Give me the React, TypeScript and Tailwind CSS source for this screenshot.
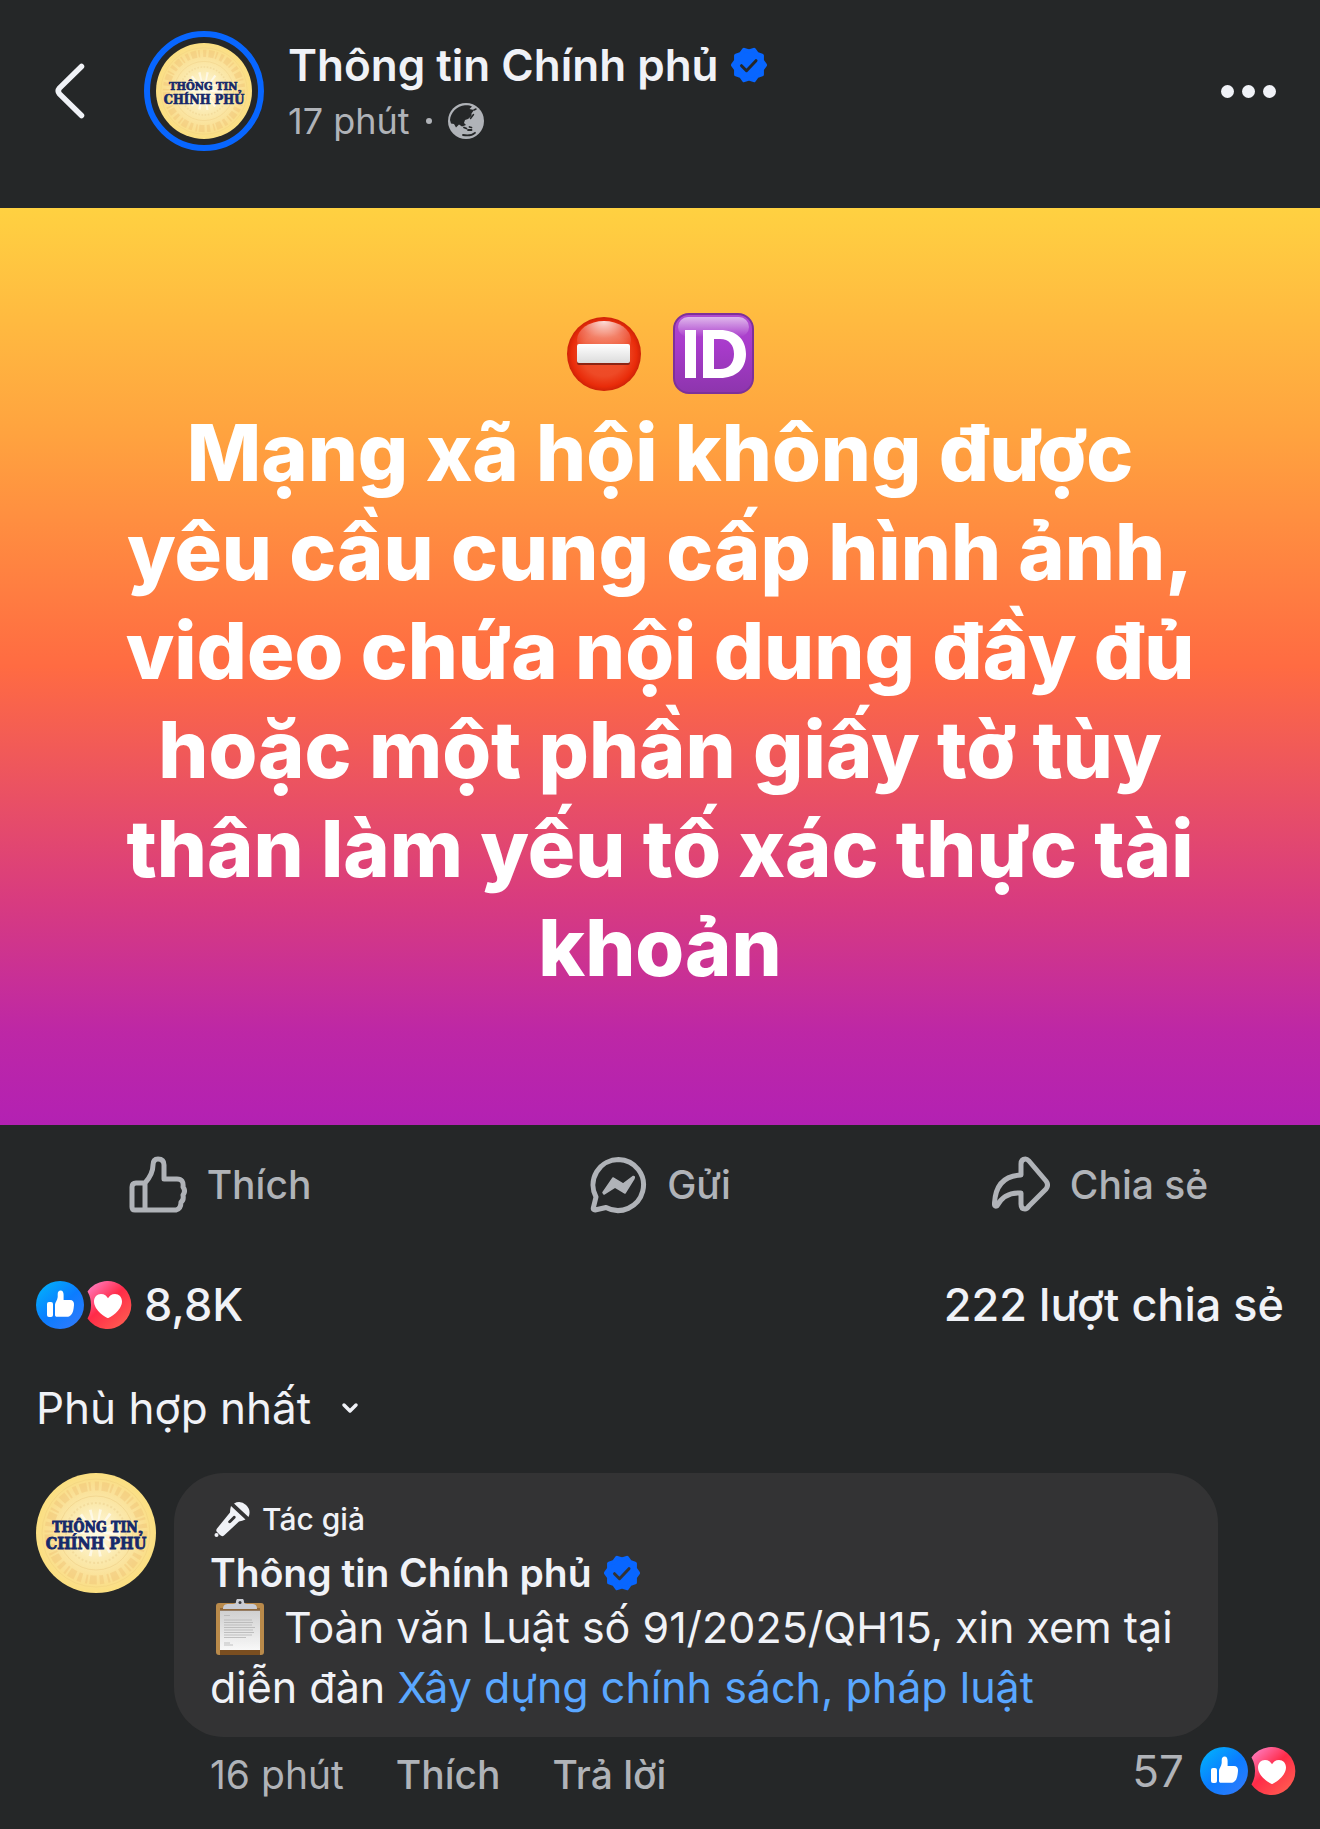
import type { ReactNode } from "react";

const starPoints = (lobes: number, outer: number, inner: number) =>
  Array.from({ length: lobes * 2 }, (_, i) => {
    const r = i % 2 === 0 ? outer : inner;
    const a = (i * Math.PI) / lobes;
    return `${(18 + r * Math.cos(a)).toFixed(2)},${(18 + r * Math.sin(a)).toFixed(2)}`;
  }).join(" ");

function Verified({ check }: { check: string }) {
  return (
    <svg viewBox="0 0 36 36" className="size-9 shrink-0" role="img" aria-label="Đã xác minh">
      <polygon points={starPoints(10, 16, 13.6)} fill="#0866ff" stroke="#0866ff" strokeWidth="4" strokeLinejoin="round" />
      <path d="M10.5 18.7l5 5 9.5-10" fill="none" stroke={check} strokeWidth="3" strokeLinecap="round" strokeLinejoin="round" />
    </svg>
  );
}

function Seal({ className }: { className: string }) {
  return (
    <svg viewBox="0 0 120 120" className={className} role="img" aria-label="Thông tin Chính phủ">
      <defs>
        <radialGradient id="gold">
          <stop offset="0" stopColor="#fffbe6" />
          <stop offset="0.45" stopColor="#fbeab0" />
          <stop offset="0.8" stopColor="#fadf92" />
          <stop offset="1" stopColor="#fbdf80" />
        </radialGradient>
      </defs>
      <circle cx="60" cy="60" r="60" fill="url(#gold)" />
      <circle cx="60" cy="60" r="47" fill="none" stroke="#efc376" strokeOpacity="0.45" strokeWidth="9" strokeDasharray="4 3 7 2 2 4" />
      <circle cx="60" cy="60" r="54" fill="none" stroke="#f0cf7c" strokeOpacity="0.5" />
      <circle cx="60" cy="60" r="37" fill="none" stroke="#f0d28a" strokeOpacity="0.7" />
      <circle cx="60" cy="60" r="30" fill="none" stroke="#efd393" strokeOpacity="0.6" strokeDasharray="2 2" strokeWidth="2" />
      <circle cx="60" cy="60" r="16" fill="none" stroke="#fff" strokeOpacity="0.6" strokeWidth="16" strokeDasharray="2 5" />
      <g
        fill="#16296b"
        stroke="#16296b"
        strokeWidth="0.8"
        textAnchor="middle"
        fontFamily="'DejaVu Serif Condensed','DejaVu Serif',serif"
        fontWeight="700"
      >
        <text x="59" y="59" fontSize="14">THÔNG TIN</text>
        <text x="60" y="76" fontSize="16">CHÍNH PHỦ</text>
      </g>
    </svg>
  );
}

function Reactions() {
  return (
    <svg viewBox="0 0 96 48" className="h-12 w-24 shrink-0" role="img" aria-label="Thích, Yêu thích">
      <defs>
        <linearGradient id="blue" x1="0.1" y1="0.1" x2="0.8" y2="0.9">
          <stop offset="0" stopColor="#02adfc" />
          <stop offset="0.55" stopColor="#0b7cff" />
          <stop offset="1" stopColor="#2a7bfc" />
        </linearGradient>
        <linearGradient id="red" x1="0.1" y1="0.1" x2="0.8" y2="0.95">
          <stop offset="0" stopColor="#ff74b4" />
          <stop offset="0.45" stopColor="#ff2b48" />
          <stop offset="1" stopColor="#ff5a50" />
        </linearGradient>
      </defs>
      <path d="M51.5 10.5A24 24 0 1 1 51.5 37.5A27.5 27.5 0 0 0 51.5 10.5Z" fill="url(#red)" />
      <circle cx="24" cy="24" r="24" fill="url(#blue)" />
      <rect x="11" y="21" width="6" height="15" rx="2" fill="#fff" />
      <path d="M19 23.5C19 21.5 21.5 19.5 21.7 16V13C21.7 11 22.8 9.5 24.6 9.5C26.8 9.5 27.6 11.5 27.6 14V19H34C37 19 38.3 21 38 24C37.5 29 37 32 35 34C33.8 35.3 32.5 35.8 30.5 35.8H21C19.7 35.8 19 35 19 34Z" fill="#fff" />
      <path d="M72 37C70.5 37 58 29.5 58 20.5C58 16 61 13 65 13C68.5 13 70.8 15 72 17.3C73.2 15 75.5 13 79 13C83 13 86 16 86 20.5C86 29.5 73.5 37 72 37Z" fill="#fff" />
    </svg>
  );
}

function Globe() {
  return (
    <svg viewBox="0 0 36 36" className="size-9" role="img" aria-label="Công khai">
      <circle cx="18" cy="18" r="18" fill="#b0b3b8" />
      <path d="M2 17C2.5 9.5 9 2.8 17 2.2C20 2 22.5 2.5 24 3.5L21.5 6L26 7L23.5 10.5L23.5 13L20 16L17 17L16 20L18 22L14 23.5L11 21.5L8 24.5L6 21L3 20.5Z" fill="#252728" />
      <path d="M22.5 15.5L25.5 11.5M26 7L28 6" stroke="#252728" strokeWidth="1.5" strokeLinecap="round" />
      <path d="M16 24.5l2.5 1M21.5 24l2 .5M20 27h3.5M15 32c4 .8 9 .5 12-2.2" stroke="#252728" strokeWidth="1.8" strokeLinecap="round" fill="none" />
    </svg>
  );
}

function NoEntry() {
  return (
    <svg viewBox="0 0 74 74" className="size-[74px]" role="img" aria-label="Cấm">
      <defs>
        <radialGradient id="ne" cx="0.5" cy="0.5" r="0.5">
          <stop offset="0" stopColor="#f0502c" />
          <stop offset="0.6" stopColor="#ee4a26" />
          <stop offset="0.88" stopColor="#e92c0a" />
          <stop offset="1" stopColor="#cf2207" />
        </radialGradient>
        <radialGradient id="neShine" cx="0.5" cy="0" r="0.9">
          <stop offset="0" stopColor="#fff" stopOpacity="0.85" />
          <stop offset="0.5" stopColor="#fff" stopOpacity="0.3" />
          <stop offset="1" stopColor="#fff" stopOpacity="0" />
        </radialGradient>
        <linearGradient id="neBar" x1="0" y1="0" x2="0" y2="1">
          <stop offset="0" stopColor="#fff" />
          <stop offset="1" stopColor="#dcdcdc" />
        </linearGradient>
      </defs>
      <circle cx="37" cy="37" r="37" fill="url(#ne)" />
      <ellipse cx="37" cy="23" rx="27" ry="19" fill="url(#neShine)" />
      <rect x="10" y="28" width="53" height="20" rx="2" fill="#8d2413" />
      <rect x="10" y="27" width="53" height="19" rx="2" fill="url(#neBar)" />
    </svg>
  );
}

function IdBadge() {
  return (
    <svg viewBox="0 0 81 81" className="size-[81px]" role="img" aria-label="ID">
      <defs>
        <linearGradient id="idBg" x1="0" y1="0" x2="0" y2="1">
          <stop offset="0" stopColor="#b04bd0" />
          <stop offset="0.4" stopColor="#a83bcb" />
          <stop offset="1" stopColor="#8d35ad" />
        </linearGradient>
        <linearGradient id="idShine" x1="0" y1="0" x2="0" y2="1">
          <stop offset="0" stopColor="#fff" stopOpacity="0.6" />
          <stop offset="1" stopColor="#fff" stopOpacity="0" />
        </linearGradient>
      </defs>
      <rect x="1" y="1" width="79" height="79" rx="15" fill="url(#idBg)" stroke="#7d3199" strokeWidth="2" />
      <rect x="5" y="4" width="71" height="20" rx="10" fill="url(#idShine)" />
      <rect x="12" y="17" width="11" height="48" fill="#fff" />
      <path d="M30 17H47C63 17 73 26 73 41S63 65 47 65H30ZM41 26V56H47C56 56 61 50 61 41S56 26 47 26Z" fill="#fff" fillRule="evenodd" />
    </svg>
  );
}

function Clipboard() {
  return (
    <svg viewBox="0 0 48 56" className="mr-5 ml-1.5 inline-block h-14 w-12 align-[-12px]" role="img" aria-label="Bảng ghi">
      <defs>
        <linearGradient id="paper" x1="0" y1="0" x2="0" y2="1">
          <stop offset="0" stopColor="#cfcfcf" />
          <stop offset="1" stopColor="#f8f8f8" />
        </linearGradient>
      </defs>
      <rect x="0" y="4" width="48" height="52" rx="3" fill="#b98a4a" />
      <rect x="4" y="50" width="40" height="6" fill="#7a4e20" />
      <rect x="4" y="11" width="40" height="40" fill="url(#paper)" />
      <rect x="4" y="9" width="40" height="3" fill="#7d5a34" opacity="0.7" />
      <path d="M7 10C7 6 9 5 13 5H17C19 5 20 4 20 3A4 4 0 0 1 28 3C28 4 29 5 31 5H35C39 5 41 6 41 10Z" fill="#c9ccd4" />
      <circle cx="24" cy="3.5" r="1.5" fill="#3a3a3c" />
      <path d="M8 16.5h6M8 21h28M8 23.5h29M8 26h28M8 28.5h31M8 31h29M8 33.5h30M8 36h28M8 38.5h22M8 44h6M8 46h9" stroke="#b4b4b4" strokeWidth="0.8" />
    </svg>
  );
}

function Action({ icon, label }: { icon: ReactNode; label: string }) {
  return (
    <button type="button" className="flex items-center justify-center gap-5">
      {icon}
      <span>{label}</span>
    </button>
  );
}

const stroke = { fill: "none", stroke: "#b0b3b8", strokeWidth: 5, strokeLinejoin: "round" as const, strokeLinecap: "round" as const };

export default function App() {
  return (
    <main className="min-h-screen bg-[#252728] font-['Inter','Noto_Sans',sans-serif] text-[#f0f2f7]">
      <header className="flex h-52 items-start pt-[31px] pr-11 pl-12">
        <button type="button" aria-label="Quay lại" className="flex h-[120px] w-24 items-center">
          <svg viewBox="0 0 44 60" className="h-[60px] w-11">
            <path d="M33.5 5.5L11.5 27Q9 30 11.5 33L33.5 54.5" fill="none" stroke="#f0f2f7" strokeWidth="5.5" strokeLinecap="round" />
          </svg>
        </button>
        <div className="size-[120px] shrink-0 rounded-full border-6 border-[#0866ff] p-1.5">
          <Seal className="size-full" />
        </div>
        <div className="ml-6 flex-1">
          <div className="flex items-center gap-3">
            <h1 className="text-[44px] leading-[68px] font-semibold">Thông tin Chính phủ</h1>
            <Verified check="#252728" />
          </div>
          <div className="flex items-center gap-4 text-[36px] leading-11 text-[#b0b3b8]">
            <span>17 phút</span>
            <span className="size-1.5 rounded-full bg-[#b0b3b8]" />
            <Globe />
          </div>
        </div>
        <button type="button" aria-label="Tùy chọn khác" className="flex h-[120px] items-center gap-2">
          <span className="size-[13px] rounded-full bg-[#f0f2f7]" />
          <span className="size-[13px] rounded-full bg-[#f0f2f7]" />
          <span className="size-[13px] rounded-full bg-[#f0f2f7]" />
        </button>
      </header>

      <section className="bg-[linear-gradient(180deg,#ffd141_0%,#ffa23f_25%,#ff6b42_50%,#d93c7e_75%,#bd27a6_90%,#b321b3_100%)] px-24 pt-[105px] pb-32 text-center text-white">
        <div className="flex h-[90px] items-start justify-center gap-8">
          <span className="flex h-[81px] items-center"><NoEntry /></span>
          <IdBadge />
        </div>
        <p className="text-[79px] leading-[99px] font-extrabold">
          Mạng xã hội không được<br />
          yêu cầu cung cấp hình ảnh,<br />
          video chứa nội dung đầy đủ<br />
          hoặc một phần giấy tờ tùy<br />
          thân làm yếu tố xác thực tài<br />
          khoản
        </p>
      </section>

      <div className="grid h-[120px] grid-cols-3 text-[39px] font-medium text-[#b0b3b8]">
        <Action
          label="Thích"
          icon={
            <svg viewBox="0 0 58 58" className="size-[58px]" {...stroke}>
              <path d="M16 27H7Q3 27 3 31V51Q3 54 6 54H47Q52 53 52 46Q55 44 54 39Q57 35 54 31Q55 23 48 23H35V9Q35 3 29 3Q24 3 24 9Q24 18 16 27V54" />
            </svg>
          }
        />
        <Action
          label="Gửi"
          icon={
            <svg viewBox="0 0 58 58" className="size-[58px]" {...stroke}>
              <path d="M29.5 3.5A25.5 25.5 0 1 1 17 51.5L6 54Q4 54 4.3 52L7 41A25.5 25.5 0 0 1 29.5 3.5Z" />
              <path d="M14 36.5L24 22L34 28L44 20.5Q46 20 45 22.5L36 37L26 31L15 38Z" fill="#b0b3b8" strokeWidth="1.5" />
            </svg>
          }
        />
        <Action
          label="Chia sẻ"
          icon={
            <svg viewBox="0 0 58 58" className="size-[58px]" {...stroke}>
              <path d="M29 19V8Q29 3 33.5 3Q35 3 37 5L54 25Q57 29 54 33L37 50Q35 53 33 53Q29 53 29 48V37Q12 36 5 50Q2 51 2.5 47Q4 20 29 19Z" />
            </svg>
          }
        />
      </div>

      <div className="flex items-center justify-between px-9 pt-9 text-[45px] leading-12 font-medium">
        <div className="flex items-center gap-3">
          <Reactions />
          <span>8,8K</span>
        </div>
        <span>222 lượt chia sẻ</span>
      </div>

      <button type="button" className="mt-[53px] ml-9 flex items-center gap-[30px] text-[44px] leading-[52px]">
        <span>Phù hợp nhất</span>
        <svg viewBox="0 0 18 12" className="h-3 w-[18px]">
          <path d="M3 3l6 6 6-6" fill="none" stroke="#f0f2f7" strokeWidth="3.5" strokeLinecap="round" strokeLinejoin="round" />
        </svg>
      </button>

      <article className="mt-[39px] flex gap-[18px] pr-6 pl-9">
        <Seal className="size-[120px] shrink-0" />
        <div className="flex-1">
          <div className="mr-[78px] rounded-[50px] bg-[#333334] pt-6 pr-8 pb-5 pl-9">
            <div className="flex items-center gap-3 text-[30px] leading-11 font-medium">
              <svg viewBox="0 0 36 36" className="ml-1 size-9" fill="#f0f2f7">
                <path d="M20 2.5A10.5 10.5 0 0 1 34.5 16Z" />
                <path fillRule="evenodd" d="M17 5L31.5 18.5Q28 20 25 20.5L10 34.5Q8 36 6 34L3 31Q1.5 29.5 3 27.5L16 11.5Q16 8 17 5ZM19.5 15L14.5 20Q13.5 21.5 15 22Q16 22.5 17 21.5L21.5 17Q22 15.5 21 15Q20 14.5 19.5 15Z" />
                <circle cx="2.5" cy="34" r="2" />
              </svg>
              <span>Tác giả</span>
            </div>
            <div className="mt-2 flex items-center gap-3 text-[39px] leading-12 font-semibold">
              <h2>Thông tin Chính phủ</h2>
              <Verified check="#333334" />
            </div>
            <p className="text-[43px] leading-[60px]">
              <Clipboard />
              Toàn văn Luật số 91/2025/QH15, xin xem tại diễn đàn{" "}
              <a href="#" className="text-[#5aa7ff]">Xây dựng chính sách, pháp luật</a>
            </p>
          </div>
          <div className="flex items-start pt-2.5 pl-9 text-[39px] leading-14 text-[#b0b3b8]">
            <span>16 phút</span>
            <button type="button" className="ml-[52px] font-medium">Thích</button>
            <button type="button" className="ml-[52px] font-medium">Trả lời</button>
            <span className="mr-4 ml-auto text-[44px] leading-12">57</span>
            <Reactions />
          </div>
        </div>
      </article>
    </main>
  );
}
